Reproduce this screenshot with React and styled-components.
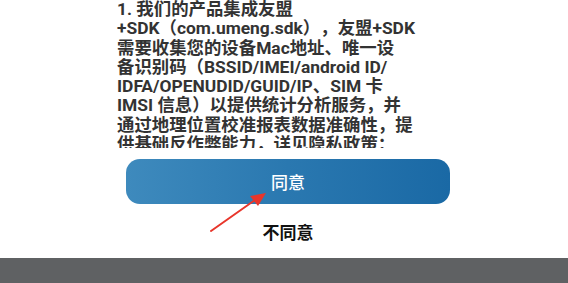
import React from "react";
import styled, { createGlobalStyle } from "styled-components";

const Global = createGlobalStyle`
  html, body { margin: 0; padding: 0; background: #ffffff; }
  body {
    font-family: Roboto, "Noto Sans CJK SC", sans-serif;
    text-spacing-trim: space-all;
  }
`;

const Page = styled.div`
  position: relative;
  width: 568px;
  height: 283px;
  display: flex;
  flex-direction: column;
  background: #ffffff;
  overflow: hidden;
`;

const Scroll = styled.div`
  height: 148px;
  overflow: hidden;
  padding-left: 117px;
  padding-top: 0px;
  box-sizing: border-box;
`;

const Line = styled.div`
  white-space: nowrap;
  font-size: 17.4px;
  line-height: 19.3px;
  font-weight: 700;
  color: #333333;
  text-spacing-trim: space-all;
`;

const AgreeButton = styled.button`
  margin: 11px 0 0 126px;
  width: 324px;
  height: 45px;
  border: none;
  border-radius: 14px;
  background: linear-gradient(90deg, #3e8abd 0%, #2a78b0 50%, #1a69a5 100%);
  color: #ffffff;
  font-family: Roboto, "Noto Sans CJK SC", sans-serif;
  font-size: 17px;
  font-weight: 500;
  padding: 0;
  display: flex;
  align-items: center;
  justify-content: center;
`;

const Disagree = styled.div`
  height: 54px;
  display: flex;
  align-items: center;
  justify-content: center;
  padding-left: 8px;
  font-size: 17px;
  font-weight: 700;
  color: #111111;
`;

const BottomBar = styled.div`
  flex: 1;
  background: #5f6163;
`;

const Arrow = styled.svg`
  position: absolute;
  left: 0;
  top: 0;
  pointer-events: none;
`;

const lines = [
  "1. 我们的产品集成友盟",
  "+SDK（com.umeng.sdk），友盟+SDK",
  "需要收集您的设备Mac地址、唯一设",
  "备识别码（BSSID/IMEI/android ID/",
  "IDFA/OPENUDID/GUID/IP、SIM 卡",
  "IMSI 信息）以提供统计分析服务，并",
  "通过地理位置校准报表数据准确性，提",
  "供基础反作弊能力，详见隐私政策：",
];

export default function App() {
  return (
    <>
      <Global />
      <Page>
        <Scroll>
          {lines.map((l, i) => (
            <Line key={i}>{l}</Line>
          ))}
        </Scroll>
        <AgreeButton>同意</AgreeButton>
        <Disagree>不同意</Disagree>
        <BottomBar />
        <Arrow width="568" height="283" viewBox="0 0 568 283">
          <line x1="211" y1="231" x2="255" y2="200" stroke="#e8362b" strokeWidth="2" strokeLinecap="round" />
          <polygon points="266,193 250,196 258,206" fill="#e8362b" />
        </Arrow>
      </Page>
    </>
  );
}
